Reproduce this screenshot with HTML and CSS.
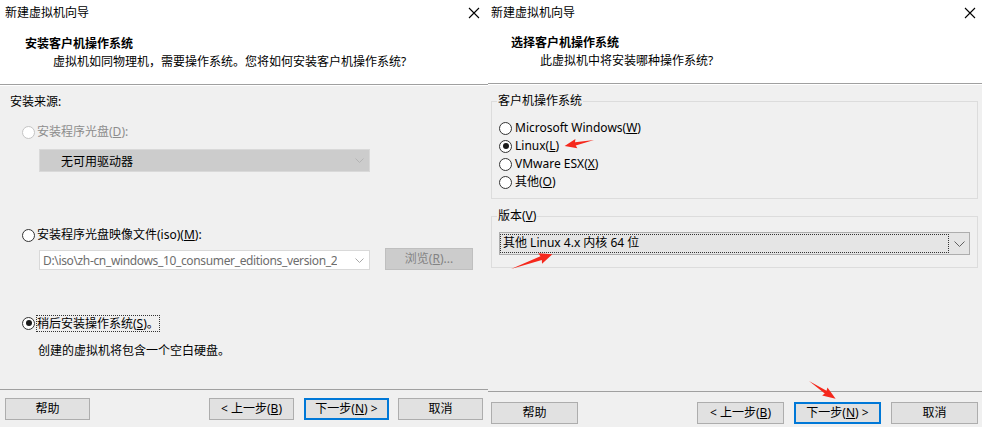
FILE: index.html
```html
<!DOCTYPE html>
<html lang="zh-CN">
<head>
    <meta charset="UTF-8">
    <title>新建虚拟机向导</title>
    <link rel="stylesheet" href="styles.css">
</head>
<body>

<div class="page">

    <!-- left dialog: install source -->
    <div class="wizard wizard-left">
        <div class="top">
            <div class="titlebar">
                <span>新建虚拟机向导</span>
                <svg class="close" width="12" height="12" viewBox="0 0 12 12"><path d="M1 1 L11 11 M11 1 L1 11" stroke="#000" stroke-width="1.1" fill="none"/></svg>
            </div>
            <div class="head">
                <div class="head-title">安装客户机操作系统</div>
                <div class="head-sub">虚拟机如同物理机，需要操作系统。您将如何安装客户机操作系统?</div>
            </div>
        </div>

        <div class="body">
            <div class="src-label">安装来源:</div>

            <div class="radio-row disabled row-disc">
                <span class="radio"></span>
                <span>安装程序光盘(<u>D</u>):</span>
            </div>
            <div class="combo combo-disabled">
                <span class="combo-text">无可用驱动器</span>
                <svg class="chev" width="9" height="5" viewBox="0 0 9 5"><polyline points="0.5,0.5 4.5,4.5 8.5,0.5" fill="none" stroke="#b4b4b4"/></svg>
            </div>

            <div class="radio-row row-iso">
                <span class="radio"></span>
                <span>安装程序光盘映像文件(iso)(<u>M</u>):</span>
            </div>
            <div class="iso-line">
                <div class="combo combo-iso">
                    <span class="combo-text">D:\iso\zh-cn_windows_10_consumer_editions_version_2</span>
                    <svg class="chev" width="9" height="5" viewBox="0 0 9 5"><polyline points="0.5,0.5 4.5,4.5 8.5,0.5" fill="none" stroke="#a8a8a8"/></svg>
                </div>
                <button class="btn btn-browse">浏览(<u>R</u>)...</button>
            </div>

            <div class="radio-row row-later">
                <span class="radio checked"></span>
                <span class="focus">稍后安装操作系统(<u>S</u>)。</span>
            </div>
            <div class="desc">创建的虚拟机将包含一个空白硬盘。</div>
        </div>

        <div class="footer">
            <button class="btn">帮助</button>
            <span class="spacer"></span>
            <button class="btn">&lt; 上一步(<u>B</u>)</button>
            <button class="btn btn-default">下一步(<u>N</u>) &gt;</button>
            <button class="btn btn-cancel">取消</button>
        </div>
    </div>

    <!-- right dialog: guest os -->
    <div class="wizard wizard-right">
        <div class="top">
            <div class="titlebar">
                <span>新建虚拟机向导</span>
                <svg class="close" width="12" height="12" viewBox="0 0 12 12"><path d="M1 1 L11 11 M11 1 L1 11" stroke="#000" stroke-width="1.1" fill="none"/></svg>
            </div>
            <div class="head">
                <div class="head-title">选择客户机操作系统</div>
                <div class="head-sub">此虚拟机中将安装哪种操作系统?</div>
            </div>
        </div>

        <div class="body">
            <fieldset class="group group-os">
                <legend>客户机操作系统</legend>
                <div class="radio-row"><span class="radio"></span><span>Microsoft Windows(<u>W</u>)</span></div>
                <div class="radio-row"><span class="radio checked"></span><span>Linux(<u>L</u>)</span></div>
                <div class="radio-row"><span class="radio"></span><span>VMware ESX(<u>X</u>)</span></div>
                <div class="radio-row"><span class="radio"></span><span>其他(<u>O</u>)</span></div>
            </fieldset>

            <fieldset class="group group-ver">
                <legend>版本(<u>V</u>)</legend>
                <div class="combo combo-ver">
                    <span class="combo-text focus">其他 Linux 4.x 内核 64 位</span>
                    <svg class="chev" width="11" height="6" viewBox="0 0 11 6"><polyline points="0.5,0.5 5.5,5.5 10.5,0.5" fill="none" stroke="#606060"/></svg>
                </div>
            </fieldset>
        </div>

        <div class="footer">
            <button class="btn">帮助</button>
            <span class="spacer"></span>
            <button class="btn">&lt; 上一步(<u>B</u>)</button>
            <button class="btn btn-default">下一步(<u>N</u>) &gt;</button>
            <button class="btn btn-cancel">取消</button>
        </div>
    </div>

    <!-- red annotation arrows drawn over the screenshots -->
    <svg class="marks" width="982" height="427" viewBox="0 0 982 427">
        <g fill="#f5281c">
            <polygon transform="translate(594 140) rotate(168.3)" points="0,0 19,-1.6 18,-4.8 30,0 18,4.8 19,1.6"/>
            <polygon transform="translate(511 269) rotate(-19.7)" points="0,0 32,-2 31,-5.5 44,0 31,5.5 32,2"/>
            <polygon transform="translate(809 381) rotate(33.7)" points="0,0 20,-1.6 19,-4.8 32,0 19,4.8 20,1.6"/>
        </g>
    </svg>
</div>

</body>
</html>
```

FILE: styles.css
```css
* {
    box-sizing: border-box;
}
body {
    margin: 0;
    font-family: "Noto Sans", "Noto Sans CJK SC", sans-serif;
    font-size: 12px;
    color: #000;
    background: #f0f0f0;
}
u {
    text-decoration: underline;
    text-underline-offset: 1px;
}
.page {
    position: relative;
    display: flex;
    width: 982px;
    height: 427px;
}
.wizard {
    display: flex;
    flex-direction: column;
    height: 427px;
    background: #f0f0f0;
}
.wizard-left {
    width: 488px;
}
.wizard-right {
    width: 494px;
}

/* white header */
.top {
    background: #fff;
    height: 85px;
    border-bottom: 1px solid #a0a0a0;
}
.wizard-right .top {
    height: 84px;
}
.titlebar {
    height: 26px;
    display: flex;
    align-items: center;
    justify-content: space-between;
    padding: 0 8px 0 5px;
    line-height: 16px;
}
.wizard-right .titlebar {
    padding: 0 6px 0 3px;
}
.head {
    padding: 9px 0 0 25px;
}
.wizard-right .head {
    padding: 8px 0 0 23px;
}
.head-title {
    font-weight: bold;
    line-height: 18px;
}
.head-sub {
    line-height: 18px;
    padding-left: 28px;
}
.wizard-right .head-sub {
    padding-left: 29px;
}

/* body */
.body {
    flex: 1;
    border-top: 1px solid #fff;
}
.wizard-left .body {
    padding-left: 10px;
}
.src-label {
    margin-top: 8px;
    line-height: 16px;
}
.radio-row {
    display: flex;
    align-items: center;
    height: 18px;
    line-height: 18px;
    white-space: nowrap;
}
.wizard-left .radio-row {
    margin-left: 12px;
}
.radio {
    width: 13px;
    height: 13px;
    border: 1px solid #333;
    border-radius: 50%;
    background: #fff;
    margin-right: 2px;
    position: relative;
    flex-shrink: 0;
}
.wizard-right .radio {
    margin-right: 3px;
}
.radio.checked::after {
    content: "";
    position: absolute;
    left: 2.5px;
    top: 2.5px;
    width: 6px;
    height: 6px;
    border-radius: 50%;
    background: #1a1a1a;
}
.radio-row.disabled {
    color: #8d8d8d;
}
.radio-row.disabled .radio {
    border-color: #c4c4c4;
}
.row-disc {
    margin-top: 13px;
}
.row-iso {
    margin-top: 54px;
}
.row-later {
    margin-top: 44px;
}
.focus {
    outline: 1px dotted #333;
    outline-offset: 0;
    line-height: 15px;
}
.desc {
    margin: 10px 0 0 28px;
    line-height: 18px;
}

/* combo boxes */
.combo {
    display: flex;
    align-items: center;
    justify-content: space-between;
    border: 1px solid #d9d9d9;
    white-space: nowrap;
    overflow: hidden;
}
.combo-text {
    overflow: hidden;
}
.combo-disabled {
    margin: 8px 0 0 29px;
    width: 331px;
    height: 23px;
    background: #cccccc;
    padding: 0 5px 0 21px;
}
.iso-line {
    display: flex;
    align-items: flex-end;
    margin: 4px 0 0 29px;
    height: 22px;
}
.combo-iso {
    width: 331px;
    height: 20px;
    background: #fff;
    color: #6d6d6d;
    padding: 0 5px 0 3px;
    flex-shrink: 0;
}
.combo-iso .combo-text {
    letter-spacing: -0.35px;
}

/* group boxes */
.group {
    margin: 8px 4px 0 3px;
    padding: 10px 7px 7px 7px;
    border: 1px solid #dcdcdc;
    min-width: 0;
}
.group legend {
    padding: 0 1px;
    margin-left: -2px;
    line-height: 16px;
}
.group-ver {
    margin-top: 9px;
    padding: 8px 7px 12px 7px;
}
.combo-ver {
    height: 23px;
    background: #e5e5e5;
    border-color: #adadad;
    padding: 1px 4px 1px 1px;
}
.combo-ver .combo-text {
    flex: 1;
    height: 17px;
    line-height: 15px;
    padding-left: 2px;
    margin-right: 6px;
}

/* footer buttons */
.footer {
    display: flex;
    align-items: flex-start;
    border-top: 1px solid #a0a0a0;
    height: 38px;
    padding: 8px 5px 0 5px;
}
.wizard-right .footer {
    height: 36px;
    padding: 10px 4px 0 3px;
}
.spacer {
    flex: 1;
}
.btn {
    font: inherit;
    color: #000;
    height: 22px;
    width: 85px;
    padding: 0;
    margin: 0;
    background: #e1e1e1;
    border: 1px solid #adadad;
    line-height: 18px;
    flex-shrink: 0;
}
.wizard-right .btn {
    width: 87px;
    height: 22px;
}
.btn-default {
    margin-left: 10px;
    border: 2px solid #0078d7;
}
.btn-cancel {
    margin-left: 9px;
}
.wizard-right .btn-default,
.wizard-right .btn-cancel {
    margin-left: 10px;
}
.iso-line .btn-browse {
    margin-left: 15px;
    width: 88px;
    background: #cccccc;
    border-color: #bfbfbf;
    color: #838383;
}

.marks {
    position: absolute;
    left: 0;
    top: 0;
    pointer-events: none;
}
```
